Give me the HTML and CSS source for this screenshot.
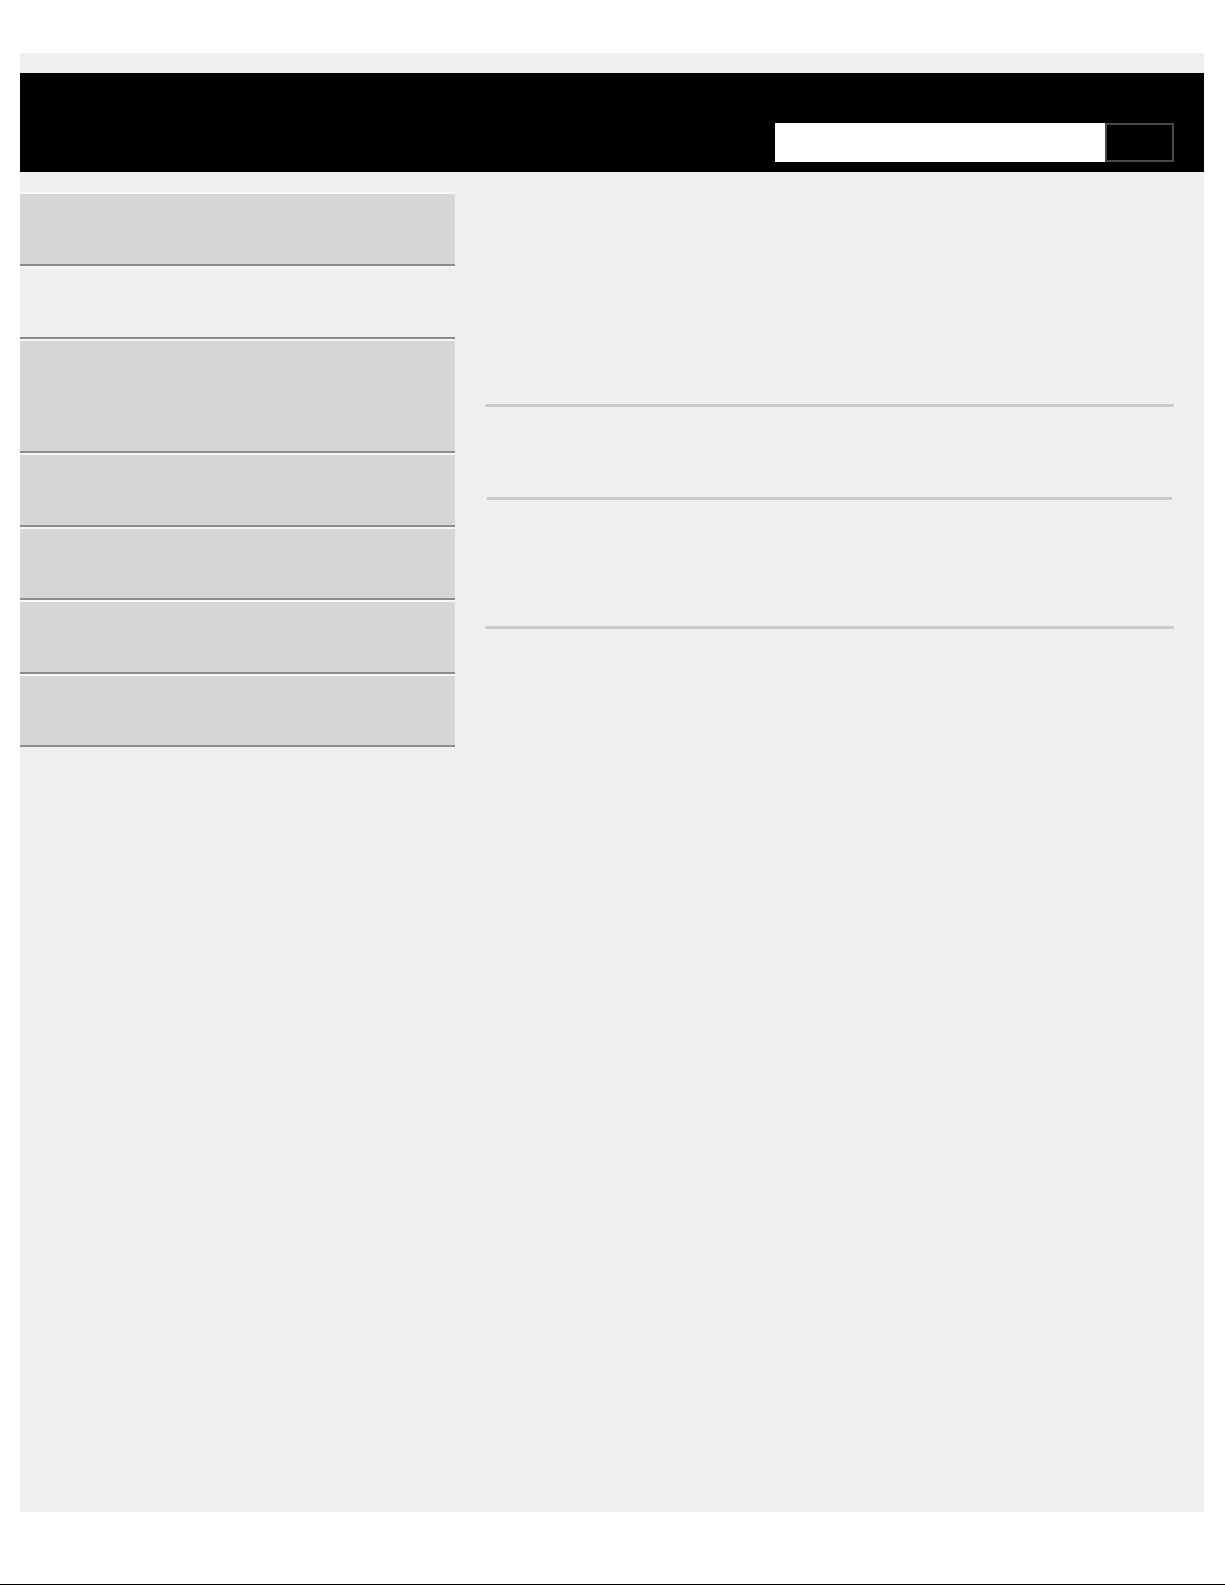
FILE: index.html
```html
<!DOCTYPE html>
<html lang="en">

<head>
    <meta charset="UTF-8">
    <meta name="viewport" content="width=device-width, initial-scale=1.0">
    <title>Page</title>
    <link rel="stylesheet" href="styles.css">
</head>

<body>

    <div class="page">
        <div class="header">
            <form class="search">
                <input type="text" class="search-input" aria-label="Search">
                <button type="button" class="search-btn" aria-label="Go"></button>
            </form>
        </div>

        <div class="layout">
            <ul class="sidebar">
                <li class="nav-item"></li>
                <li class="nav-item plain"></li>
                <li class="nav-item tall"></li>
                <li class="nav-item"></li>
                <li class="nav-item"></li>
                <li class="nav-item"></li>
                <li class="nav-item"></li>
            </ul>

            <div class="content">
                <div class="block block-top"></div>
                <div class="block block-mid"></div>
                <div class="block block-low"></div>
            </div>
        </div>
    </div>

    <div class="footer"></div>

</body>

</html>
```

FILE: styles.css
```css
body {
    margin: 0;
    background-color: #ffffff;
    font-family: "Liberation Sans", Arial, sans-serif;
}

.page {
    margin: 53px 21px 0 20px;
    padding-top: 20px;
    height: 1459px;
    box-sizing: border-box;
    background-color: #efefef;
}

.header {
    height: 99px;
    background-color: #000000;
    display: flex;
    justify-content: flex-end;
    align-items: flex-end;
    padding: 0 30px 10px 0;
    box-sizing: border-box;
}

.search {
    display: flex;
    margin: 0;
}

.search-input {
    width: 330px;
    height: 39px;
    border: none;
    padding: 0 8px;
    box-sizing: border-box;
    background-color: #ffffff;
}

.search-btn {
    width: 69px;
    height: 39px;
    border: 2px solid #4a4a4a;
    background-color: #000000;
    box-sizing: border-box;
    padding: 0;
}

.layout {
    display: flex;
    gap: 30px;
    padding-top: 20px;
}

.sidebar {
    list-style-type: none;
    margin: 0;
    padding: 0;
    width: 435px;
    flex-shrink: 0;
}

.nav-item {
    height: 73.5px;
    box-sizing: border-box;
    background-color: #d6d6d6;
    border-top: 2px solid #f6f6f6;
    border-bottom: 2px solid #8c8c8c;
}

.nav-item.plain {
    background-color: transparent;
}

.nav-item.tall {
    height: 114px;
}

.content {
    flex: 1;
    padding-right: 30px;
}

.block {
    border-bottom: 3px solid #cccccc;
}

.block-top {
    height: 212px;
}

.block-mid {
    height: 90px;
    margin: 0 2px;
}

.block-low {
    height: 126px;
}

.footer {
    margin-top: 72px;
    height: 20px;
    border-top: 1px solid #000000;
}
```
